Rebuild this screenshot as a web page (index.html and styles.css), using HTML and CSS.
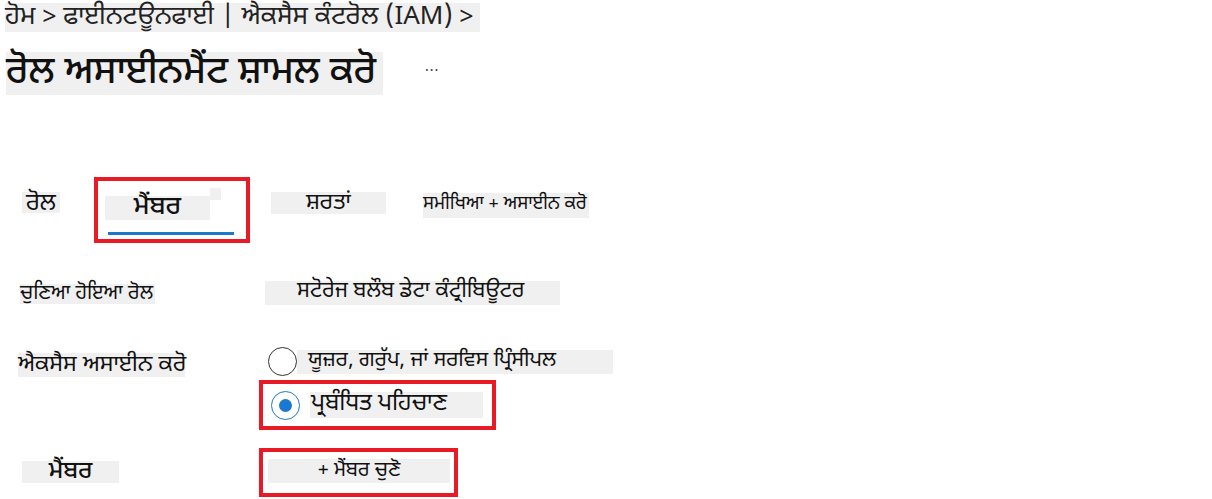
FILE: index.html
```html
<!DOCTYPE html>
<html lang="pa">
<head>
<meta charset="utf-8">
<link rel="stylesheet" href="styles.css">
</head>
<body>
<div class="page">
  <div class="crumb-row"><span class="crumb">ਹੋਮ &gt; ਫਾਈਨਟਊਨਫਾਈ | ਐਕਸੈਸ ਕੰਟਰੋਲ (IAM) &gt;</span></div>
  <div class="title-row">
    <h1 class="title">ਰੋਲ ਅਸਾਈਨਮੈਂਟ ਸ਼ਾਮਲ ਕਰੋ</h1>
    <span class="dots">···</span>
  </div>
  <div class="tabs">
    <div class="tab tab-role"><span class="lbl">ਰੋਲ</span></div>
    <div class="tab-active">
      <div class="tab-active-inner">
        <span class="lbl lbl-members">ਮੈਂਬਰ</span>
        <span class="mini"></span>
      </div>
      <div class="underline"></div>
    </div>
    <div class="tab tab-cond"><span class="lbl">ਸ਼ਰਤਾਂ</span></div>
    <div class="tab tab-review"><span class="lbl">ਸਮੀਖਿਆ + ਅਸਾਈਨ ਕਰੋ</span></div>
  </div>
  <div class="row row-role">
    <span class="lbl key key-role">ਚੁਣਿਆ ਹੋਇਆ ਰੋਲ</span>
    <span class="lbl val-role">ਸਟੋਰੇਜ ਬਲੌਬ ਡੇਟਾ ਕੰਟ੍ਰੀਬਿਊਟਰ</span>
  </div>
  <div class="row row-access">
    <span class="lbl key key-access">ਐਕਸੈਸ ਅਸਾਈਨ ਕਰੋ</span>
    <div class="options">
      <div class="opt opt-user">
        <span class="radio"></span>
        <span class="lbl opt-lbl-user">ਯੂਜ਼ਰ, ਗਰੁੱਪ, ਜਾਂ ਸਰਵਿਸ ਪ੍ਰਿੰਸੀਪਲ</span>
      </div>
      <div class="opt opt-mi hl">
        <span class="radio checked"></span>
        <span class="lbl opt-lbl-mi">ਪ੍ਰਬੰਧਿਤ ਪਹਿਚਾਣ</span>
      </div>
    </div>
  </div>
  <div class="row row-members">
    <span class="lbl key key-members">ਮੈਂਬਰ</span>
    <div class="hl select-box"><span class="lbl select-btn">+ ਮੈਂਬਰ ਚੁਣੋ</span></div>
  </div>
</div>
</body>
</html>
```
FILE: styles.css
```css
* { box-sizing: border-box; }
html, body { margin: 0; padding: 0; background: #fff; }
body {
  font-family: "Noto Sans Gurmukhi", "Noto Sans", "DejaVu Sans", sans-serif;
  color: #111;
  width: 1212px;
  height: 499px;
  overflow: hidden;
}
.lbl {
  background: #f0f0f0;
  display: flex;
  align-items: center;
  white-space: nowrap;
  line-height: 1;
  overflow: visible;
}
.crumb-row { padding: 3px 0 0 5px; }
.crumb {
  display: flex;
  align-items: center;
  width: 475px;
  height: 29px;
  background: #f0f0f0;
  font-size: 26px;
  line-height: 1;
  color: #222;
  white-space: nowrap;
}
.title-row {
  display: flex;
  align-items: center;
  margin-top: 20px;
  padding-left: 6px;
}
.title {
  margin: 0;
  width: 377px;
  height: 43px;
  background: #f0f0f0;
  font-size: 38px;
  line-height: 1;
  font-weight: 500;
  display: flex;
  align-items: center;
  white-space: nowrap;
  color: #111;
}
.dots {
  margin-left: 42px;
  font-size: 14px;
  color: #333;
  letter-spacing: 1px;
  margin-top: -4px;
}
.tabs {
  display: flex;
  align-items: flex-start;
  margin-top: 82px;
  padding-left: 22px;
  height: 66px;
}
.tab { margin-top: 15px; }
.tab-role .lbl { width: 38px; height: 21px; font-size: 24px; justify-content: center; padding-top: 3px; }
.tab-active {
  margin-left: 34px;
  width: 156px;
  height: 66px;
  border: 4px solid #e81a26;
  padding: 11px 0 0 7px;
}
.tab-active-inner { display: flex; align-items: flex-start; }
.lbl-members {
  width: 105px;
  height: 24px;
  font-size: 26px;
  font-weight: 500;
  justify-content: center;
  margin-top: 4px;
}
.mini {
  width: 11px;
  height: 12px;
  background: #f0f0f0;
  margin-top: -4px;
}
.underline {
  width: 126px;
  height: 3px;
  background: #1a78d0;
  margin: 12px 0 0 3px;
}
.tab-cond { margin-left: 21px; }
.tab-cond .lbl { width: 115px; height: 22px; font-size: 23px; justify-content: center; }
.tab-review { margin-left: 37px; margin-top: 16px; }
.tab-review .lbl { width: 166px; height: 25px; font-size: 18.5px; }
.row { display: flex; align-items: flex-start; }
.row-role { margin-top: 38px; padding-left: 20px; }
.key-role { width: 135px; height: 20px; margin-top: 3px; font-size: 20px; }
.val-role {
  margin-left: 110px;
  width: 295px;
  height: 24px;
  font-size: 21.5px;
  padding-left: 32px;
}
.row-access { margin-top: 42px; padding-left: 18px; }
.key-access { width: 167px; height: 24px; font-size: 23px; margin-top: 6px; }
.options { margin-left: 74px; display: flex; flex-direction: column; }
.opt { display: flex; align-items: center; }
.opt-user { margin-left: 9px; }
.radio {
  width: 29px;
  height: 29px;
  border-radius: 50%;
  border: 1.5px solid #333;
  background: #fff;
  flex: none;
  display: flex;
  align-items: center;
  justify-content: center;
}
.radio.checked { border-color: #1a78d0; }
.radio.checked::after {
  content: "";
  width: 13px;
  height: 13px;
  border-radius: 50%;
  background: #1a78d0;
}
.opt-lbl-user { width: 316px; height: 24px; font-size: 21px; padding-left: 11px; }
.hl { border: 4px solid #e81a26; }
.opt-mi {
  margin-top: 4px;
  width: 237px;
  height: 50px;
  padding-left: 8px;
}
.opt-lbl-mi { width: 173px; height: 26px; font-size: 23.5px; margin-left: 10px; padding-left: 1px; }
.row-members { margin-top: 18px; padding-left: 22px; }
.key-members {
  width: 97px;
  height: 22px;
  font-size: 24px;
  font-weight: 500;
  justify-content: center;
  margin-top: 13px;
}
.select-box {
  margin-left: 140px;
  width: 199px;
  height: 49px;
  padding: 7px 0 0 5px;
}
.select-btn { width: 182px; height: 24px; font-size: 20px; justify-content: center; }
```
